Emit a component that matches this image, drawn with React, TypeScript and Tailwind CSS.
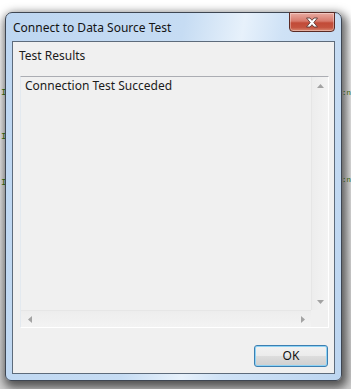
import React from 'react';

const ScrollArrow: React.FC<{ dir: 'up' | 'down' | 'left' | 'right' }> = ({ dir }) => {
    const pts = {
        up: '0,4 7,4 3.5,0',
        down: '0,0 7,0 3.5,4',
        left: '4,0 4,7 0,3.5',
        right: '0,0 0,7 4,3.5',
    }[dir];
    const vertical = dir === 'up' || dir === 'down';
    return (
        <svg width={vertical ? 7 : 4} height={vertical ? 4 : 7} viewBox={vertical ? '0 0 7 4' : '0 0 4 7'}>
            <polygon points={pts} fill="#a3a3a3" />
        </svg>
    );
};

const CloseGlyph: React.FC = () => (
    <svg width="14" height="11" viewBox="0 0 14 11">
        <path
            d="M1.5 1 H5 L7 3.3 L9 1 H12.5 L8.8 5.5 L12.5 10 H9 L7 7.7 L5 10 H1.5 L5.2 5.5 Z"
            fill="#ffffff"
            stroke="#5b3a36"
            strokeWidth="0.9"
            strokeLinejoin="round"
        />
    </svg>
);

export default function App() {
    return (
        <div className="relative w-[351px] h-[389px] overflow-hidden bg-[#f4f4f4] font-['Noto_Sans',sans-serif] text-[12px] text-[#1b1b1b]">
            {/* bits of the editor behind the dialog */}
            <div className="absolute left-0 top-0 w-full h-full bg-[linear-gradient(180deg,#ffffff_0%,#ffffff_4%,#d0d0d0_100%)]" />
            <span className="absolute left-[1px] top-[88px] text-[9px] leading-[10px] font-['Liberation_Mono',monospace] text-[#3a7f12]">I</span>
            <span className="absolute left-[1px] top-[132px] text-[9px] leading-[10px] font-['Liberation_Mono',monospace] text-[#3a7f12]">I</span>
            <span className="absolute left-[1px] top-[178px] text-[9px] leading-[10px] font-['Liberation_Mono',monospace] text-[#3a7f12]">I</span>
            <span className="absolute left-[342px] top-[88px] text-[7.5px] leading-[10px] font-['Liberation_Mono',monospace] text-[#3a7f12]">:n</span>
            <span className="absolute left-[342px] top-[175px] text-[7.5px] leading-[10px] font-['Liberation_Mono',monospace] text-[#3a7f12]">:n</span>

            <div className="relative z-10 pl-[5px] pt-[12px]">
                <div className="flex flex-col w-[337px] h-[369px] rounded-t-[7px] rounded-b-[6px] border border-[#3e4652] shadow-[2px_4px_10px_3px_rgba(0,0,0,0.6)] bg-[linear-gradient(100deg,#bdd6f1_0%,#c6dcf3_45%,#e7f1fb_60%,#cfe2f6_70%,#bcd5f0_100%)]">
                    {/* title bar */}
                    <div className="flex items-start h-[28px] shrink-0">
                        <div className="self-center pl-[7px] pt-[1px] leading-[16px] text-[12px] text-[#141414]">
                            Connect to Data Source Test
                        </div>
                        <div className="ml-auto mr-[6px] -mt-[1px] flex items-center justify-center w-[46px] h-[20px] rounded-b-[4px] border border-[#5a2a24] bg-[linear-gradient(180deg,#e9aba1_0%,#d77a6c_45%,#c24b38_55%,#c4533f_80%,#db8a73_100%)] shadow-[inset_0_0_0_1px_rgba(255,255,255,0.35)]">
                            <CloseGlyph />
                        </div>
                    </div>

                    {/* client area */}
                    <div className="flex flex-col flex-1 mx-[6px] mb-[6px] border border-[#5d6b7b] bg-[#f0f0f0]">
                        <div className="pl-[6px] pt-[6px] leading-[16px]">Test Results</div>

                        <div className="ml-[7px] mt-[12px] w-[309px] h-[252px] flex flex-col border border-[#e3e9ef] border-t-[#abadb3] border-b-[#ffffff] border-r-[#ffffff] bg-[#f0f0f0]">
                            <div className="flex flex-1">
                                <div className="flex-1 pl-[4px] pt-[1px] leading-[16px]">Connection Test Succeded</div>
                                <div className="flex flex-col w-[17px] border-l border-[#e6e6e6] bg-[linear-gradient(90deg,#ededed,#f3f3f3)]">
                                    <div className="flex items-center justify-center h-[17px]">
                                        <ScrollArrow dir="up" />
                                    </div>
                                    <div className="flex-1" />
                                    <div className="flex items-center justify-center h-[17px]">
                                        <ScrollArrow dir="down" />
                                    </div>
                                </div>
                            </div>
                            <div className="flex h-[17px]">
                                <div className="flex flex-1 border-t border-[#e6e6e6] bg-[linear-gradient(180deg,#ededed,#f3f3f3)]">
                                    <div className="flex items-center justify-center w-[17px]">
                                        <ScrollArrow dir="left" />
                                    </div>
                                    <div className="flex-1" />
                                    <div className="flex items-center justify-center w-[17px]">
                                        <ScrollArrow dir="right" />
                                    </div>
                                </div>
                                <div className="w-[17px] bg-[#f0f0f0]" />
                            </div>
                        </div>

                        <div className="flex justify-end pr-[6px] mt-[17px]">
                            <button className="flex items-center justify-center w-[74px] h-[22px] rounded-[3px] border border-[#3c7fb1] shadow-[inset_0_0_0_1px_#8fd3f5] bg-[linear-gradient(180deg,#f2f2f2_0%,#ebebeb_50%,#dddddd_51%,#cfcfcf_100%)] text-[12px] leading-[16px] text-[#111]">
                                OK
                            </button>
                        </div>
                    </div>
                </div>
            </div>
        </div>
    );
}
